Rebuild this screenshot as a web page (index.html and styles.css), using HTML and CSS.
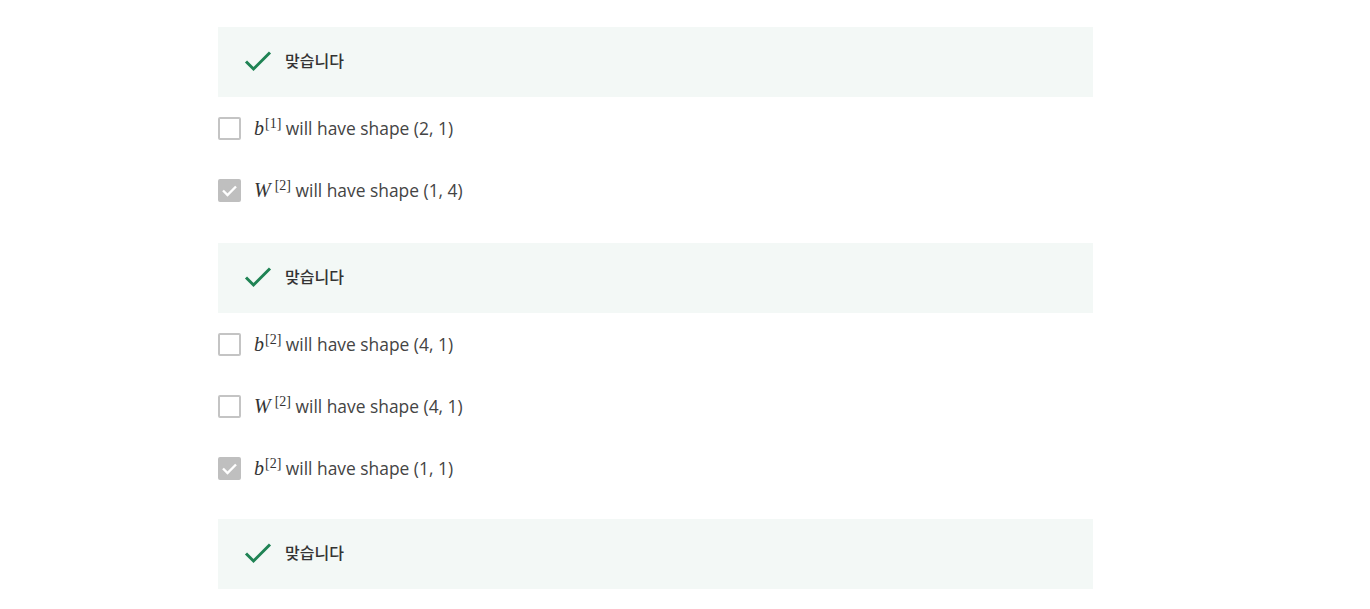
FILE: index.html
```html
<!DOCTYPE html>
<html lang="ko">
<head>
<meta charset="utf-8">
<link rel="stylesheet" href="styles.css">
</head>
<body>
<div class="quiz">
  <div class="feedback">
    <svg class="ok" width="28" height="22" viewBox="0 0 28 22"><path d="M2 11.5 L9.5 19 L26 2.5" fill="none" stroke="#1f8354" stroke-width="3"/></svg>
    <span class="ftext">맞습니다</span>
  </div>
  <div class="options first">
    <div class="opt"><span class="box"></span><span class="label"><span class="m">b</span><sup class="s">[1]</sup> will have shape (2, 1)</span></div>
    <div class="opt"><span class="box checked"><svg width="17" height="13" viewBox="0 0 17 13"><path d="M2 6.5 L6.5 11 L15 2.5" fill="none" stroke="#fff" stroke-width="2.4"/></svg></span><span class="label"><span class="m">W</span><sup class="s sw">[2]</sup> will have shape (1, 4)</span></div>
  </div>
  <div class="feedback">
    <svg class="ok" width="28" height="22" viewBox="0 0 28 22"><path d="M2 11.5 L9.5 19 L26 2.5" fill="none" stroke="#1f8354" stroke-width="3"/></svg>
    <span class="ftext">맞습니다</span>
  </div>
  <div class="options second">
    <div class="opt"><span class="box"></span><span class="label"><span class="m">b</span><sup class="s">[2]</sup> will have shape (4, 1)</span></div>
    <div class="opt"><span class="box"></span><span class="label"><span class="m">W</span><sup class="s sw">[2]</sup> will have shape (4, 1)</span></div>
    <div class="opt"><span class="box checked"><svg width="17" height="13" viewBox="0 0 17 13"><path d="M2 6.5 L6.5 11 L15 2.5" fill="none" stroke="#fff" stroke-width="2.4"/></svg></span><span class="label"><span class="m">b</span><sup class="s">[2]</sup> will have shape (1, 1)</span></div>
  </div>
  <div class="feedback">
    <svg class="ok" width="28" height="22" viewBox="0 0 28 22"><path d="M2 11.5 L9.5 19 L26 2.5" fill="none" stroke="#1f8354" stroke-width="3"/></svg>
    <span class="ftext">맞습니다</span>
  </div>
</div>
</body>
</html>
```
FILE: styles.css
```css
html, body {
  margin: 0;
  padding: 0;
  background: #fff;
}
body {
  font-family: "Open Sans", "Noto Sans CJK KR", sans-serif;
  color: #3c3c3c;
}
.quiz {
  width: 875px;
  margin-left: 218px;
  padding-top: 27px;
  display: flex;
  flex-direction: column;
}
.feedback {
  height: 70px;
  flex: none;
  background: #f3f8f6;
  display: flex;
  align-items: center;
  padding-left: 26px;
  box-sizing: border-box;
}
.ok {
  display: block;
  margin-top: -2px;
}
.ftext {
  margin-left: 13px;
  margin-top: -5px;
  font-family: "Noto Sans CJK KR", sans-serif;
  font-size: 16px;
  font-weight: 500;
  color: #333;
}
.options {
  display: flex;
  flex-direction: column;
  gap: 39px;
  padding: 20px 0 40px;
}
.options.first {
  padding-bottom: 41px;
}
.options.second {
  padding-bottom: 39px;
}
.opt {
  height: 23px;
  display: flex;
  align-items: center;
}
.box {
  width: 23px;
  height: 23px;
  box-sizing: border-box;
  border: 2px solid #c4c4c4;
  border-radius: 2px;
  flex: none;
  display: flex;
  align-items: center;
  justify-content: center;
}
.box.checked {
  background: #bfbfbf;
  border-color: #bfbfbf;
}
.label {
  margin-left: 13px;
  margin-top: -2px;
  font-size: 17.4px;
  color: #444;
  white-space: nowrap;
}
.m {
  font-family: "Liberation Serif", "DejaVu Serif", serif;
  font-style: italic;
  font-size: 20px;
  color: #333;
}
.s {
  font-family: "Liberation Serif", "DejaVu Serif", serif;
  font-size: 14px;
  vertical-align: 7px;
  line-height: 0;
  margin-left: 1px;
  margin-right: 0;
  color: #333;
}
.s.sw {
  margin-left: 4px;
}
```
